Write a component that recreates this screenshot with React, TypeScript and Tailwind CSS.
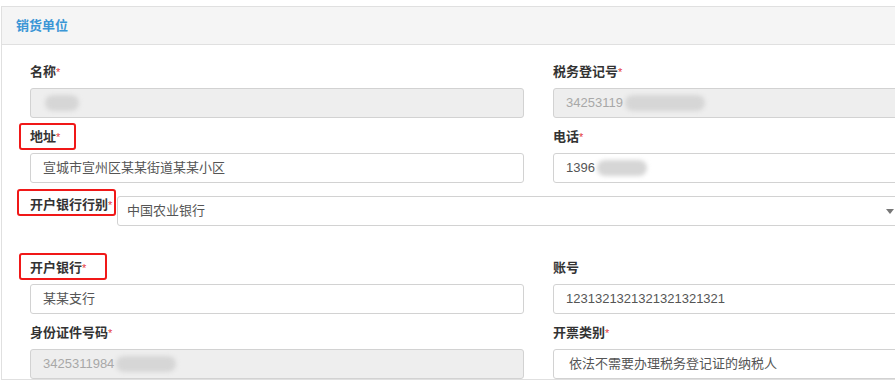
import type { ReactNode } from 'react'

const font = 'font-["Liberation_Sans","Noto_Sans_CJK_SC",sans-serif]'

function Blur({ w }: { w: number }) {
  return (
    <span
      className="ml-[2px] inline-block h-[16px] rounded-full bg-[#d6d6d6] align-middle blur-[2px]"
      style={{ width: w }}
    />
  )
}

function Label({ text, required, mark }: { text: string; required?: boolean; mark?: string }) {
  return (
    <div className="relative h-[18px] text-[13px] font-bold leading-[18px] text-[#333]">
      {mark ? <span className={`pointer-events-none absolute rounded-[3px] border-2 border-[#f01818] ${mark}`} /> : null}
      {text}
      {required ? <span className="align-top text-[11px] font-normal text-[#e4393c]">*</span> : null}
    </div>
  )
}

function Input({ children, disabled, pad = 'pl-[12px]' }: { children: ReactNode; disabled?: boolean; pad?: string }) {
  return (
    <div
      className={`mt-[7px] flex h-[30px] items-center rounded-[3px] border border-[#d2d2d2] ${pad} text-[13px] ${
        disabled ? 'bg-[#eeeeee] text-[#a8a8a8]' : 'bg-white text-[#555]'
      }`}
    >
      {children}
    </div>
  )
}

export default function App() {
  return (
    <div className={`h-[390px] w-[895px] overflow-hidden bg-white pt-[6px] ${font}`}>
      <div className="ml-[1px] w-[1120px] border border-[#e0e0e0]">
        <div className="flex h-[38px] items-center border-b border-[#e0e0e0] bg-[#f5f5f5] pl-[14px] text-[13px] font-bold text-[#3a96d6]">
          销货单位
        </div>

        <div className="pl-[28px] pt-[18px]">
          <div className="grid grid-cols-[494px_494px] gap-x-[29px]">
            <div>
              <Label text="名称" required />
              <Input disabled>
                <Blur w={34} />
              </Input>
            </div>
            <div>
              <Label text="税务登记号" required />
              <Input disabled>
                34253119
                <Blur w={80} />
              </Input>
            </div>

            <div className="mt-[10px]">
              <Label text="地址" required mark="-left-[11px] -top-[5px] h-[27px] w-[57px]" />
              <Input>宣城市宣州区某某街道某某小区</Input>
            </div>
            <div className="mt-[10px]">
              <Label text="电话" required />
              <Input>
                1396
                <Blur w={50} />
              </Input>
            </div>
          </div>

          <div className="mt-[13px] flex items-start">
            <div className="w-[87px]">
              <Label text="开户银行行别" required mark="-left-[13px] -top-[7px] h-[27px] w-[99px]" />
            </div>
            <div className="relative flex h-[30px] flex-1 items-center rounded-[3px] border border-[#d2d2d2] bg-white pl-[9px] text-[13px] text-[#555]">
              中国农业银行
              <span className="absolute left-[768px] top-[12px] h-0 w-0 border-x-[4px] border-t-[5px] border-x-transparent border-t-[#777]" />
            </div>
          </div>

          <div className="mt-[33px] grid grid-cols-[494px_494px] gap-x-[29px]">
            <div>
              <Label text="开户银行" required mark="-left-[11px] -top-[6px] h-[27px] w-[88px]" />
              <Input>某某支行</Input>
            </div>
            <div>
              <Label text="账号" />
              <Input>1231321321321321321321</Input>
            </div>

            <div className="mt-[10px]">
              <Label text="身份证件号码" required />
              <Input disabled>
                3425311984
                <Blur w={60} />
              </Input>
            </div>
            <div className="mt-[10px]">
              <Label text="开票类别" required />
              <Input pad="pl-[15px]">依法不需要办理税务登记证的纳税人</Input>
            </div>
          </div>
        </div>
      </div>
    </div>
  )
}
